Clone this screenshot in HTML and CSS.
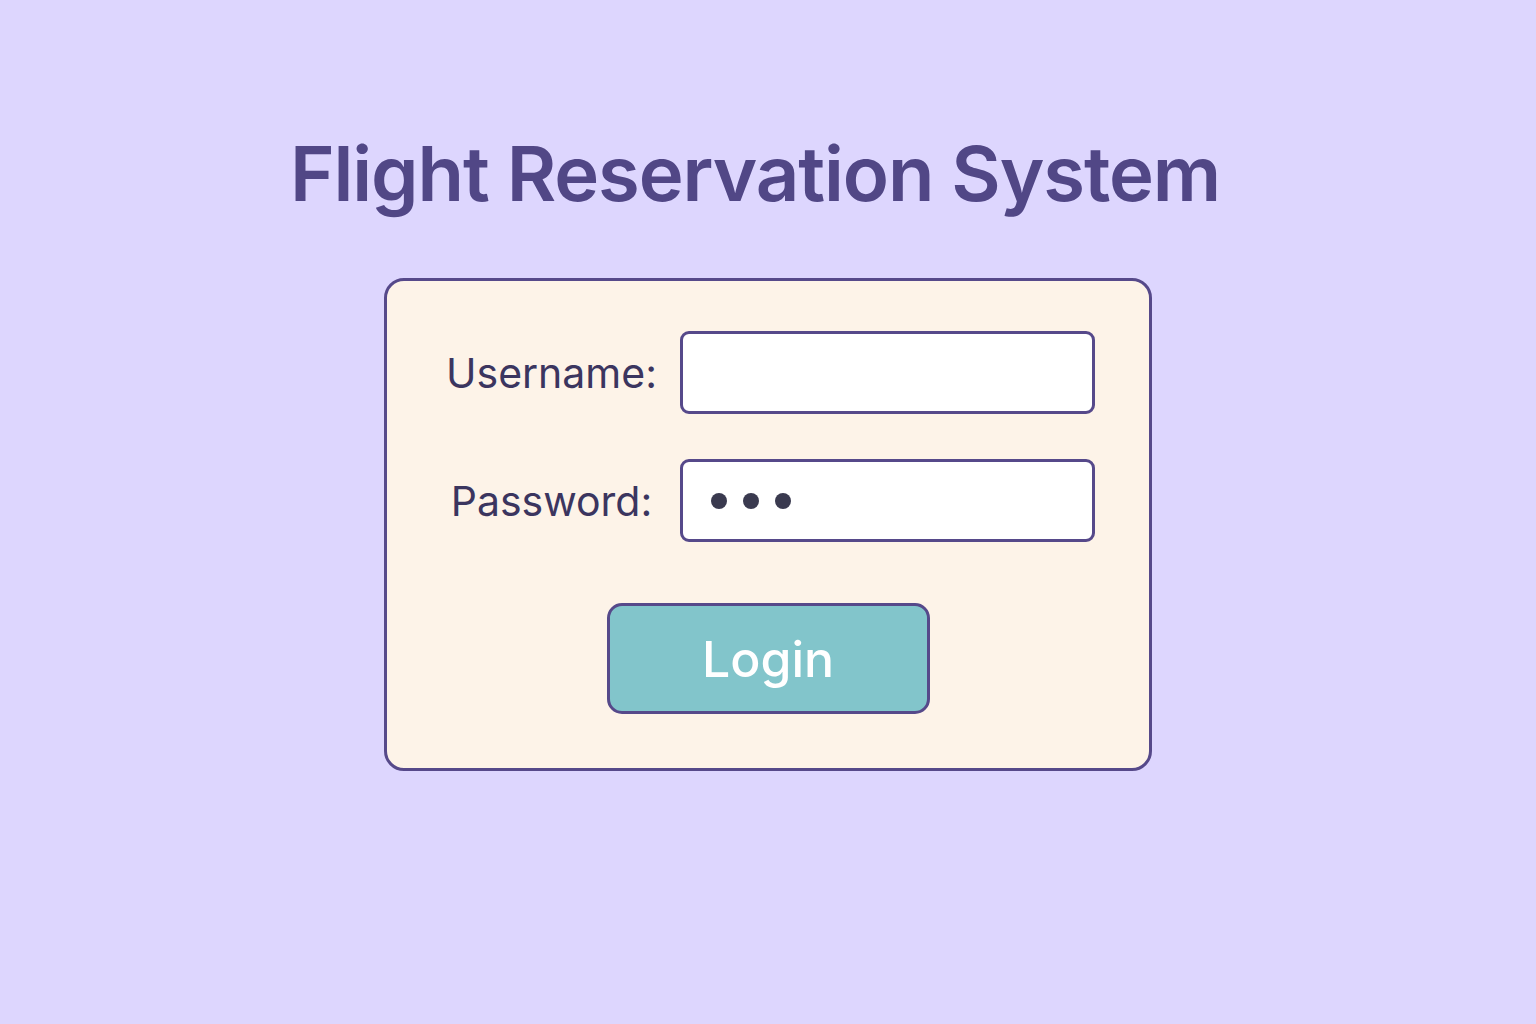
FILE: index.html
```html
<!DOCTYPE html>
<html lang="en">
<head>
<meta charset="utf-8">
<title>Flight Reservation System</title>
<link rel="stylesheet" href="styles.css">
</head>
<body>
<main class="page">
  <h1 class="title">Flight Reservation System</h1>
  <form class="card">
    <div class="fields">
      <label class="label" for="user">Username:</label>
      <div class="input" id="user"></div>
      <label class="label" for="pass">Password:</label>
      <div class="input" id="pass">
        <span class="dot"></span><span class="dot"></span><span class="dot"></span>
      </div>
    </div>
    <button type="button" class="btn">Login</button>
  </form>
</main>
</body>
</html>
```
FILE: styles.css
```css
html, body {
  margin: 0;
  padding: 0;
}
body {
  background: #ddd6fe;
  width: 1536px;
  height: 1024px;
  font-family: "Inter", "Noto Sans", sans-serif;
}
.page {
  display: flex;
  flex-direction: column;
  align-items: center;
}
.title {
  margin: 125px 0 0 -26px;
  font-size: 76px;
  line-height: 96px;
  font-weight: 600;
  color: #514786;
  letter-spacing: -1.1px;
}
.card {
  box-sizing: border-box;
  margin-top: 57px;
  width: 768px;
  height: 493px;
  background: #fdf3e8;
  border: 3px solid #56498a;
  border-radius: 20px;
  padding: 50px 54px 0 54px;
  display: flex;
  flex-direction: column;
  align-items: center;
}
.fields {
  width: 100%;
  display: grid;
  grid-template-columns: 1fr 415px;
  grid-template-rows: 83px 83px;
  row-gap: 45px;
  column-gap: 18px;
  align-items: center;
}
.label {
  justify-self: center;
  font-size: 41px;
  color: #3b355f;
}
.input {
  box-sizing: border-box;
  height: 83px;
  background: #ffffff;
  border: 3px solid #56498a;
  border-radius: 9px;
  display: flex;
  align-items: center;
  gap: 16px;
  padding-left: 28px;
}
.dot {
  width: 16px;
  height: 16px;
  border-radius: 50%;
  background: #3a3a4f;
}
.btn {
  box-sizing: border-box;
  margin-top: 61px;
  width: 323px;
  height: 111px;
  background: #82c5cb;
  border: 3px solid #56498a;
  border-radius: 15px;
  color: #ffffff;
  font-family: "Inter", "Noto Sans", sans-serif;
  font-size: 50px;
  font-weight: 500;
  padding: 0;
}
```
